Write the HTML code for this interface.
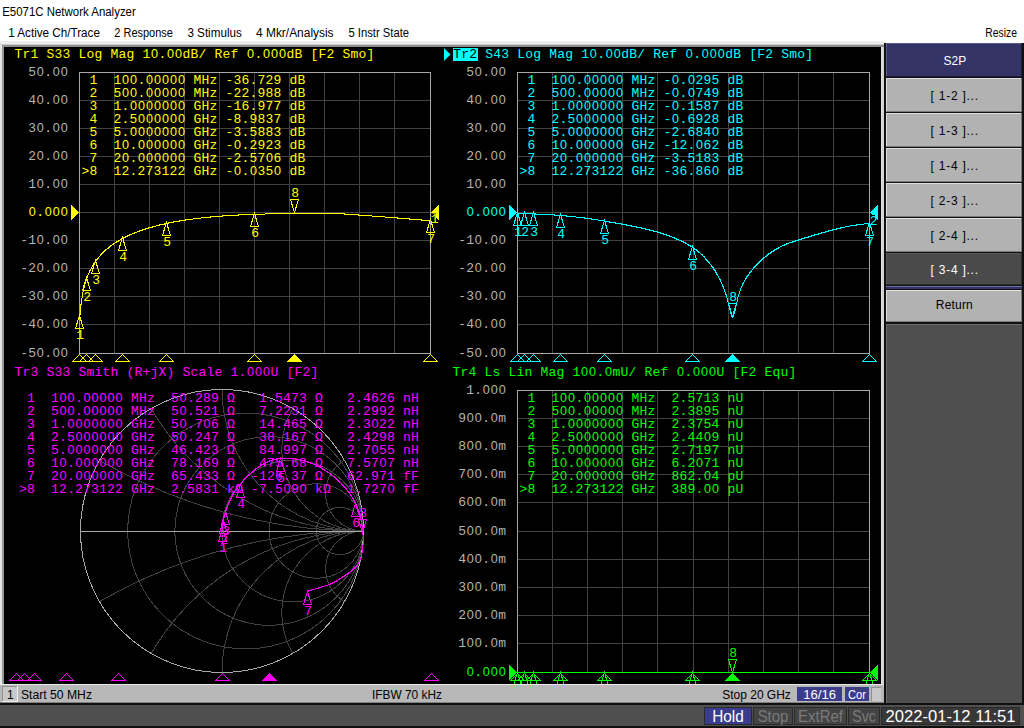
<!DOCTYPE html>
<html><head><meta charset="utf-8"><title>E5071C Network Analyzer</title>
<style>
html,body{margin:0;padding:0;background:#fff;overflow:hidden;}
svg{display:block;}
text{white-space:pre;}
.m{font-family:"Liberation Mono",monospace;font-size:13px;letter-spacing:0.2px;}
.s{font-family:"Liberation Sans",sans-serif;}
.z{font-family:"Liberation Sans",sans-serif;font-size:12.6px;letter-spacing:0.994px;}
.c{shape-rendering:crispEdges;}
</style></head><body>
<svg width="1024" height="728" viewBox="0 0 1024 728">
<defs><clipPath id="plotclip"><rect x="4" y="47" width="877" height="637"/></clipPath>
<clipPath id="smithclip"><circle cx="222" cy="531" r="141.5"/></clipPath></defs>
<rect x="0" y="0" width="1024" height="728" fill="#ffffff" />
<text class="s" x="2.2" y="16" fill="#000" font-size="12" textLength="133.6" lengthAdjust="spacingAndGlyphs" >E5071C Network Analyzer</text>
<text class="s" x="8.2" y="36.5" fill="#000" font-size="12" textLength="91.7" lengthAdjust="spacingAndGlyphs" >1 Active Ch/Trace</text>
<text class="s" x="114.3" y="36.5" fill="#000" font-size="12" textLength="58.6" lengthAdjust="spacingAndGlyphs" >2 Response</text>
<text class="s" x="187.4" y="36.5" fill="#000" font-size="12" textLength="54.4" lengthAdjust="spacingAndGlyphs" >3 Stimulus</text>
<text class="s" x="256" y="36.5" fill="#000" font-size="12" textLength="77.6" lengthAdjust="spacingAndGlyphs" >4 Mkr/Analysis</text>
<text class="s" x="348.5" y="36.5" fill="#000" font-size="12" textLength="60.6" lengthAdjust="spacingAndGlyphs" >5 Instr State</text>
<text class="s" x="985.3" y="36.5" fill="#000" font-size="12" textLength="31.7" lengthAdjust="spacingAndGlyphs" >Resize</text>
<rect x="0" y="41" width="884" height="3" fill="#ececec" />
<rect x="0" y="44" width="884" height="1" fill="#cfcfcf" />
<rect x="0" y="45" width="884" height="2" fill="#8e8e8e" />
<rect x="0" y="45" width="2" height="660" fill="#e4e4e4" />
<rect x="2" y="46" width="2" height="640" fill="#989898" />
<rect x="4" y="47" width="877" height="637" fill="#000000" />
<rect x="881" y="47" width="1" height="640" fill="#e0e0e0" />
<rect x="882" y="47" width="2" height="640" fill="#d4d4d4" />
<rect x="884" y="43" width="140" height="662" fill="#101010" />
<rect x="886" y="43" width="136" height="34" fill="#333366" />
<rect x="886" y="43" width="136" height="1" fill="#5a5a90" />
<rect x="886" y="43" width="1" height="34" fill="#5a5a90" />
<rect x="886" y="76" width="136" height="1" fill="#1c1c40" />
<rect x="1021" y="43" width="1" height="34" fill="#1c1c40" />
<text class="s" x="954.8" y="64.5" fill="#fff" font-size="12" text-anchor="middle" >S2P</text>
<rect x="886" y="78" width="136" height="34" fill="#b2b2b2" />
<rect x="886" y="78" width="136" height="1" fill="#e0e0e0" />
<rect x="886" y="78" width="1" height="34" fill="#e0e0e0" />
<rect x="886" y="111" width="136" height="1" fill="#7a7a7a" />
<rect x="1021" y="78" width="1" height="34" fill="#7a7a7a" />
<text class="s" x="930.55" y="99.5" fill="#000" font-size="12" textLength="47.5" lengthAdjust="spacing" >[ 1-2 ]...</text>
<rect x="886" y="113" width="136" height="34" fill="#b2b2b2" />
<rect x="886" y="113" width="136" height="1" fill="#e0e0e0" />
<rect x="886" y="113" width="1" height="34" fill="#e0e0e0" />
<rect x="886" y="146" width="136" height="1" fill="#7a7a7a" />
<rect x="1021" y="113" width="1" height="34" fill="#7a7a7a" />
<text class="s" x="930.55" y="134.5" fill="#000" font-size="12" textLength="47.5" lengthAdjust="spacing" >[ 1-3 ]...</text>
<rect x="886" y="148" width="136" height="34" fill="#b2b2b2" />
<rect x="886" y="148" width="136" height="1" fill="#e0e0e0" />
<rect x="886" y="148" width="1" height="34" fill="#e0e0e0" />
<rect x="886" y="181" width="136" height="1" fill="#7a7a7a" />
<rect x="1021" y="148" width="1" height="34" fill="#7a7a7a" />
<text class="s" x="930.55" y="169.5" fill="#000" font-size="12" textLength="47.5" lengthAdjust="spacing" >[ 1-4 ]...</text>
<rect x="886" y="183" width="136" height="34" fill="#b2b2b2" />
<rect x="886" y="183" width="136" height="1" fill="#e0e0e0" />
<rect x="886" y="183" width="1" height="34" fill="#e0e0e0" />
<rect x="886" y="216" width="136" height="1" fill="#7a7a7a" />
<rect x="1021" y="183" width="1" height="34" fill="#7a7a7a" />
<text class="s" x="930.55" y="204.5" fill="#000" font-size="12" textLength="47.5" lengthAdjust="spacing" >[ 2-3 ]...</text>
<rect x="886" y="218" width="136" height="34" fill="#b2b2b2" />
<rect x="886" y="218" width="136" height="1" fill="#e0e0e0" />
<rect x="886" y="218" width="1" height="34" fill="#e0e0e0" />
<rect x="886" y="251" width="136" height="1" fill="#7a7a7a" />
<rect x="1021" y="218" width="1" height="34" fill="#7a7a7a" />
<text class="s" x="930.55" y="239.5" fill="#000" font-size="12" textLength="47.5" lengthAdjust="spacing" >[ 2-4 ]...</text>
<rect x="886" y="253" width="136" height="32" fill="#4a4a4a" />
<rect x="886" y="253" width="136" height="1" fill="#5a5a5a" />
<rect x="886" y="253" width="1" height="32" fill="#5a5a5a" />
<rect x="886" y="284" width="136" height="1" fill="#303030" />
<rect x="1021" y="253" width="1" height="32" fill="#303030" />
<text class="s" x="930.55" y="274.4" fill="#fff" font-size="12" textLength="47.5" lengthAdjust="spacing" >[ 3-4 ]...</text>
<rect x="886" y="286" width="136" height="3" fill="#333366" />
<rect x="886" y="286" width="136" height="1" fill="#7070a8" />
<rect x="886" y="290" width="136" height="32" fill="#b2b2b2" />
<rect x="886" y="290" width="136" height="1" fill="#e0e0e0" />
<rect x="886" y="290" width="1" height="32" fill="#e0e0e0" />
<rect x="886" y="321" width="136" height="1" fill="#7a7a7a" />
<rect x="1021" y="290" width="1" height="32" fill="#7a7a7a" />
<text class="s" x="935.8" y="309.3" fill="#000" font-size="12" textLength="37" lengthAdjust="spacing" >Return</text>
<rect x="886" y="324" width="136" height="379" fill="#4f4f4f" />
<rect x="886" y="324" width="136" height="1" fill="#6a6a6a" />
<rect x="886" y="324" width="1" height="379" fill="#6a6a6a" />
<rect x="0" y="684" width="884" height="19" fill="#b8b8b8" />
<rect x="0" y="684" width="884" height="1" fill="#e8e8e8" />
<rect x="0" y="702" width="884" height="1" fill="#808080" />
<rect x="2" y="686" width="16" height="16" fill="#c8c8c8" />
<rect x="2" y="686" width="16" height="1" fill="#909090" />
<rect x="2" y="686" width="1" height="16" fill="#909090" />
<rect x="2" y="701" width="16" height="1" fill="#f0f0f0" />
<rect x="17" y="686" width="1" height="16" fill="#f0f0f0" />
<text class="s" x="7" y="698.5" fill="#000" font-size="12" >1</text>
<text class="s" x="21" y="698.5" fill="#000" font-size="12" textLength="71" lengthAdjust="spacingAndGlyphs" >Start 50 MHz</text>
<text class="s" x="372" y="698.5" fill="#000" font-size="12" textLength="70" lengthAdjust="spacingAndGlyphs" >IFBW 70 kHz</text>
<text class="s" x="722.3" y="698.5" fill="#000" font-size="12" textLength="68.5" lengthAdjust="spacingAndGlyphs" >Stop 20 GHz</text>
<rect x="797" y="687" width="45" height="14" fill="#3c3c8c" />
<text class="s" x="803.3" y="698.5" fill="#fff" font-size="12" textLength="32.7" lengthAdjust="spacingAndGlyphs" >16/16</text>
<rect x="845" y="687" width="24" height="14" fill="#3c3c8c" />
<text class="s" x="848.1" y="698.5" fill="#fff" font-size="12" textLength="17.9" lengthAdjust="spacingAndGlyphs" >Cor</text>
<rect x="871" y="687" width="10" height="14" fill="#c8c8c8" />
<rect x="871" y="687" width="10" height="1" fill="#909090" />
<rect x="871" y="687" width="1" height="14" fill="#909090" />
<rect x="0" y="703" width="1024" height="25" fill="#101010" />
<rect x="0" y="705" width="1024" height="21" fill="#4f4f4f" />
<rect x="704" y="707" width="48" height="18" fill="#2a2a2a" />
<rect x="705" y="708" width="46" height="16" fill="#3c3c8c" />
<text class="s" x="728.0" y="721.8" fill="#fff" font-size="16.5" text-anchor="middle" textLength="31.6" lengthAdjust="spacingAndGlyphs" >Hold</text>
<rect x="753" y="707" width="40" height="18" fill="#2a2a2a" />
<rect x="754" y="708" width="38" height="16" fill="#444444" />
<text class="s" x="773.0" y="721.8" fill="#7a7a7a" font-size="16.5" text-anchor="middle" textLength="30.6" lengthAdjust="spacingAndGlyphs" >Stop</text>
<rect x="794" y="707" width="53" height="18" fill="#2a2a2a" />
<rect x="795" y="708" width="51" height="16" fill="#444444" />
<text class="s" x="820.5" y="721.8" fill="#7a7a7a" font-size="16.5" text-anchor="middle" textLength="45" lengthAdjust="spacingAndGlyphs" >ExtRef</text>
<rect x="848" y="707" width="32" height="18" fill="#2a2a2a" />
<rect x="849" y="708" width="30" height="16" fill="#444444" />
<text class="s" x="864.0" y="721.8" fill="#7a7a7a" font-size="16.5" text-anchor="middle" textLength="23.6" lengthAdjust="spacingAndGlyphs" >Svc</text>
<rect x="881" y="707" width="139" height="18" fill="#2a2a2a" />
<rect x="882" y="708" width="137" height="16" fill="#383838" />
<text class="s" x="950.5" y="721.8" fill="#fff" font-size="16.5" text-anchor="middle" textLength="130" lengthAdjust="spacingAndGlyphs" >2022-01-12 11:51</text>
<g clip-path="url(#plotclip)">
<text class="m" y="58" fill="#ffff00" ><tspan x="14.50">Tr1 S33 Log Mag 1</tspan><tspan class="z" x="151.00">0</tspan><tspan x="158.50">.</tspan><tspan class="z" x="167.00">00</tspan><tspan x="182.50">dB/ Ref</tspan><tspan class="z" x="247.00">0</tspan><tspan x="254.50">.</tspan><tspan class="z" x="263.00">000</tspan><tspan x="286.50">dB [F2 Smo]</tspan></text>
<rect x="114" y="72" width="1" height="282" fill="#424242" class="c"/>
<rect x="149" y="72" width="1" height="282" fill="#424242" class="c"/>
<rect x="184" y="72" width="1" height="282" fill="#424242" class="c"/>
<rect x="219" y="72" width="1" height="282" fill="#424242" class="c"/>
<rect x="254" y="72" width="1" height="282" fill="#424242" class="c"/>
<rect x="289" y="72" width="1" height="282" fill="#424242" class="c"/>
<rect x="324" y="72" width="1" height="282" fill="#424242" class="c"/>
<rect x="359" y="72" width="1" height="282" fill="#424242" class="c"/>
<rect x="394" y="72" width="1" height="282" fill="#424242" class="c"/>
<rect x="79" y="100" width="352" height="1" fill="#424242" class="c"/>
<rect x="79" y="128" width="352" height="1" fill="#424242" class="c"/>
<rect x="79" y="156" width="352" height="1" fill="#424242" class="c"/>
<rect x="79" y="184" width="352" height="1" fill="#424242" class="c"/>
<rect x="79" y="212" width="352" height="1" fill="#424242" class="c"/>
<rect x="79" y="240" width="352" height="1" fill="#424242" class="c"/>
<rect x="79" y="268" width="352" height="1" fill="#424242" class="c"/>
<rect x="79" y="296" width="352" height="1" fill="#424242" class="c"/>
<rect x="79" y="324" width="352" height="1" fill="#424242" class="c"/>
<rect x="79" y="72" width="1" height="282" fill="#a8a8a8" class="c"/>
<rect x="430" y="72" width="1" height="282" fill="#a8a8a8" class="c"/>
<rect x="79" y="72" width="352" height="1" fill="#a8a8a8" class="c"/>
<rect x="79" y="353" width="352" height="1" fill="#a8a8a8" class="c"/>
<text class="m" y="76" fill="#b4b4b4" ><tspan x="28.20">5</tspan><tspan class="z" x="36.70">0</tspan><tspan x="44.20">.</tspan><tspan class="z" x="52.70">00</tspan></text>
<text class="m" y="104" fill="#b4b4b4" ><tspan x="28.20">4</tspan><tspan class="z" x="36.70">0</tspan><tspan x="44.20">.</tspan><tspan class="z" x="52.70">00</tspan></text>
<text class="m" y="132" fill="#b4b4b4" ><tspan x="28.20">3</tspan><tspan class="z" x="36.70">0</tspan><tspan x="44.20">.</tspan><tspan class="z" x="52.70">00</tspan></text>
<text class="m" y="160" fill="#b4b4b4" ><tspan x="28.20">2</tspan><tspan class="z" x="36.70">0</tspan><tspan x="44.20">.</tspan><tspan class="z" x="52.70">00</tspan></text>
<text class="m" y="188" fill="#b4b4b4" ><tspan x="28.20">1</tspan><tspan class="z" x="36.70">0</tspan><tspan x="44.20">.</tspan><tspan class="z" x="52.70">00</tspan></text>
<text class="m" y="216" fill="#ffff00" ><tspan class="z" x="28.70">0</tspan><tspan x="36.20">.</tspan><tspan class="z" x="44.70">000</tspan></text>
<text class="m" y="244" fill="#b4b4b4" ><tspan x="20.20">-1</tspan><tspan class="z" x="36.70">0</tspan><tspan x="44.20">.</tspan><tspan class="z" x="52.70">00</tspan></text>
<text class="m" y="272" fill="#b4b4b4" ><tspan x="20.20">-2</tspan><tspan class="z" x="36.70">0</tspan><tspan x="44.20">.</tspan><tspan class="z" x="52.70">00</tspan></text>
<text class="m" y="300" fill="#b4b4b4" ><tspan x="20.20">-3</tspan><tspan class="z" x="36.70">0</tspan><tspan x="44.20">.</tspan><tspan class="z" x="52.70">00</tspan></text>
<text class="m" y="328" fill="#b4b4b4" ><tspan x="20.20">-4</tspan><tspan class="z" x="36.70">0</tspan><tspan x="44.20">.</tspan><tspan class="z" x="52.70">00</tspan></text>
<text class="m" y="357" fill="#b4b4b4" ><tspan x="20.20">-5</tspan><tspan class="z" x="36.70">0</tspan><tspan x="44.20">.</tspan><tspan class="z" x="52.70">00</tspan></text>
<text class="m" y="84" fill="#ffff00" ><tspan x="89.50">1  1</tspan><tspan class="z" x="122.00">00</tspan><tspan x="137.50">.</tspan><tspan class="z" x="146.00">00000</tspan><tspan x="193.50">MHz -36.729 dB</tspan></text>
<text class="m" y="97" fill="#ffff00" ><tspan x="89.50">2  5</tspan><tspan class="z" x="122.00">00</tspan><tspan x="137.50">.</tspan><tspan class="z" x="146.00">00000</tspan><tspan x="193.50">MHz -22.988 dB</tspan></text>
<text class="m" y="110" fill="#ffff00" ><tspan x="89.50">3  1.</tspan><tspan class="z" x="130.00">0000000</tspan><tspan x="193.50">GHz -16.977 dB</tspan></text>
<text class="m" y="123" fill="#ffff00" ><tspan x="89.50">4  2.5</tspan><tspan class="z" x="138.00">000000</tspan><tspan x="193.50">GHz -8.9837 dB</tspan></text>
<text class="m" y="136" fill="#ffff00" ><tspan x="89.50">5  5.</tspan><tspan class="z" x="130.00">0000000</tspan><tspan x="193.50">GHz -3.5883 dB</tspan></text>
<text class="m" y="149" fill="#ffff00" ><tspan x="89.50">6  1</tspan><tspan class="z" x="122.00">0</tspan><tspan x="129.50">.</tspan><tspan class="z" x="138.00">000000</tspan><tspan x="193.50">GHz -</tspan><tspan class="z" x="234.00">0</tspan><tspan x="241.50">.2923 dB</tspan></text>
<text class="m" y="162" fill="#ffff00" ><tspan x="89.50">7  2</tspan><tspan class="z" x="122.00">0</tspan><tspan x="129.50">.</tspan><tspan class="z" x="138.00">000000</tspan><tspan x="193.50">GHz -2.57</tspan><tspan class="z" x="266.00">0</tspan><tspan x="273.50">6 dB</tspan></text>
<text class="m" y="175" fill="#ffff00" ><tspan x="81.50">&gt;8  12.273122 GHz -</tspan><tspan class="z" x="234.00">0</tspan><tspan x="241.50">.</tspan><tspan class="z" x="250.00">0</tspan><tspan x="257.50">35</tspan><tspan class="z" x="274.00">0</tspan><tspan x="289.50">dB</tspan></text>
<polyline class="c" points="79.5,318.5 79.5,317.5 79.5,318.5 79.5,316.5 80.5,313.5 80.5,311.5 80.5,309.5 80.5,307.5 80.5,305.5 81.5,303.5 81.5,301.5 81.5,300.5 81.5,298.5 82.5,297.5 82.5,296.5 82.5,294.5 82.5,293.5 82.5,292.5 83.5,291.5 83.5,290.5 83.5,289.5 83.5,288.5 84.5,287.5 84.5,286.5 84.5,285.5 84.5,284.5 85.5,283.5 85.5,282.5 85.5,281.5 86.5,280.5 86.5,279.5 86.5,278.5 87.5,277.5 87.5,276.5 87.5,275.5 88.5,274.5 88.5,273.5 89.5,272.5 89.5,271.5 89.5,270.5 90.5,270.5 90.5,269.5 91.5,268.5 91.5,267.5 92.5,266.5 92.5,265.5 93.5,265.5 93.5,264.5 93.5,263.5 94.5,263.5 94.5,262.5 95.5,262.5 95.5,261.5 95.5,260.5 96.5,260.5 96.5,259.5 97.5,259.5 97.5,258.5 98.5,258.5 98.5,257.5 99.5,256.5 100.5,255.5 100.5,254.5 101.5,254.5 101.5,253.5 102.5,253.5 102.5,252.5 103.5,252.5 103.5,251.5 104.5,251.5 104.5,250.5 105.5,250.5 105.5,249.5 106.5,249.5 107.5,248.5 108.5,248.5 108.5,247.5 109.5,247.5 109.5,246.5 110.5,246.5 110.5,245.5 111.5,245.5 112.5,244.5 113.5,244.5 113.5,243.5 114.5,243.5 115.5,242.5 116.5,242.5 116.5,241.5 117.5,241.5 118.5,241.5 118.5,240.5 119.5,240.5 120.5,239.5 121.5,239.5 121.5,238.5 122.5,238.5 123.5,238.5 123.5,237.5 124.5,237.5 125.5,237.5 125.5,236.5 126.5,236.5 127.5,236.5 127.5,235.5 128.5,235.5 129.5,235.5 129.5,234.5 130.5,234.5 131.5,234.5 132.5,233.5 133.5,233.5 134.5,233.5 134.5,232.5 135.5,232.5 136.5,232.5 137.5,231.5 138.5,231.5 139.5,231.5 139.5,230.5 140.5,230.5 141.5,230.5 142.5,230.5 142.5,229.5 143.5,229.5 144.5,229.5 145.5,229.5 145.5,228.5 146.5,228.5 147.5,228.5 148.5,228.5 148.5,227.5 149.5,227.5 150.5,227.5 151.5,227.5 152.5,227.5 152.5,226.5 153.5,226.5 154.5,226.5 155.5,226.5 156.5,225.5 157.5,225.5 158.5,225.5 159.5,225.5 159.5,224.5 160.5,224.5 161.5,224.5 162.5,224.5 163.5,224.5 164.5,224.5 164.5,223.5 165.5,223.5 166.5,223.5 167.5,223.5 168.5,223.5 168.5,222.5 169.5,222.5 170.5,222.5 171.5,222.5 172.5,222.5 173.5,222.5 173.5,221.5 174.5,221.5 175.5,221.5 176.5,221.5 177.5,221.5 178.5,221.5 179.5,221.5 179.5,220.5 180.5,220.5 181.5,220.5 182.5,220.5 183.5,220.5 184.5,220.5 185.5,220.5 185.5,219.5 186.5,219.5 187.5,219.5 188.5,219.5 189.5,219.5 190.5,219.5 191.5,219.5 192.5,219.5 193.5,218.5 194.5,218.5 195.5,218.5 196.5,218.5 197.5,218.5 198.5,218.5 199.5,218.5 200.5,218.5 201.5,217.5 202.5,217.5 203.5,217.5 204.5,217.5 205.5,217.5 206.5,217.5 207.5,217.5 208.5,217.5 209.5,217.5 210.5,217.5 210.5,216.5 211.5,216.5 212.5,216.5 213.5,216.5 214.5,216.5 215.5,216.5 216.5,216.5 217.5,216.5 218.5,216.5 219.5,216.5 220.5,216.5 221.5,216.5 222.5,216.5 222.5,215.5 223.5,215.5 224.5,215.5 225.5,215.5 226.5,215.5 227.5,215.5 228.5,215.5 229.5,215.5 230.5,215.5 231.5,215.5 232.5,215.5 233.5,215.5 234.5,215.5 235.5,215.5 236.5,215.5 237.5,215.5 238.5,215.5 238.5,214.5 239.5,214.5 240.5,214.5 241.5,214.5 242.5,214.5 243.5,214.5 244.5,214.5 245.5,214.5 246.5,214.5 247.5,214.5 248.5,214.5 249.5,214.5 250.5,214.5 251.5,214.5 252.5,214.5 253.5,214.5 254.5,214.5 255.5,214.5 256.5,214.5 257.5,214.5 258.5,214.5 259.5,214.5 260.5,214.5 261.5,214.5 262.5,214.5 263.5,214.5 264.5,214.5 265.5,213.5 266.5,213.5 267.5,213.5 268.5,213.5 269.5,213.5 270.5,213.5 271.5,213.5 272.5,213.5 273.5,213.5 274.5,213.5 275.5,213.5 276.5,213.5 277.5,213.5 278.5,213.5 279.5,213.5 280.5,213.5 281.5,213.5 282.5,213.5 283.5,213.5 284.5,213.5 285.5,213.5 286.5,213.5 287.5,213.5 288.5,213.5 289.5,213.5 290.5,213.5 291.5,213.5 292.5,213.5 293.5,213.5 294.5,213.5 295.5,213.5 296.5,213.5 297.5,213.5 298.5,213.5 299.5,213.5 300.5,213.5 301.5,213.5 302.5,213.5 303.5,213.5 304.5,213.5 305.5,213.5 306.5,213.5 307.5,213.5 308.5,213.5 309.5,213.5 310.5,213.5 311.5,213.5 312.5,213.5 313.5,213.5 314.5,213.5 315.5,213.5 316.5,213.5 317.5,213.5 318.5,213.5 319.5,213.5 320.5,213.5 321.5,213.5 322.5,213.5 323.5,213.5 324.5,213.5 325.5,213.5 326.5,213.5 327.5,213.5 328.5,213.5 329.5,213.5 330.5,213.5 331.5,213.5 332.5,213.5 333.5,213.5 334.5,213.5 335.5,213.5 336.5,213.5 337.5,213.5 338.5,213.5 339.5,213.5 340.5,213.5 341.5,213.5 342.5,213.5 343.5,213.5 344.5,213.5 344.5,214.5 345.5,214.5 346.5,214.5 347.5,214.5 348.5,214.5 349.5,214.5 350.5,214.5 351.5,214.5 352.5,214.5 353.5,214.5 354.5,214.5 355.5,214.5 356.5,214.5 357.5,214.5 358.5,214.5 358.5,215.5 359.5,215.5 360.5,215.5 361.5,215.5 362.5,215.5 363.5,215.5 364.5,215.5 365.5,215.5 366.5,215.5 367.5,215.5 368.5,215.5 369.5,215.5 370.5,215.5 371.5,215.5 372.5,216.5 373.5,216.5 374.5,216.5 375.5,216.5 376.5,216.5 377.5,216.5 378.5,216.5 379.5,216.5 380.5,216.5 381.5,216.5 382.5,216.5 383.5,216.5 384.5,216.5 385.5,217.5 386.5,217.5 387.5,217.5 388.5,217.5 389.5,217.5 390.5,217.5 391.5,217.5 392.5,217.5 393.5,217.5 394.5,217.5 395.5,217.5 396.5,217.5 397.5,217.5 397.5,218.5 398.5,218.5 399.5,218.5 400.5,218.5 401.5,218.5 402.5,218.5 403.5,218.5 404.5,218.5 405.5,218.5 406.5,218.5 407.5,218.5 408.5,218.5 409.5,218.5 409.5,219.5 410.5,219.5 411.5,219.5 412.5,219.5 413.5,219.5 414.5,219.5 415.5,219.5 416.5,219.5 417.5,219.5 418.5,219.5 419.5,219.5 420.5,219.5 421.5,219.5 421.5,220.5 422.5,220.5 423.5,220.5 424.5,220.5 425.5,220.5 426.5,220.5 427.5,220.5 428.5,220.5 429.5,220.5 430.5,220.5" fill="none" stroke="#ffff00" stroke-width="1"/>
<path class="c" d="M71,205 L79,212.5 L71,220 Z" fill="#ffff00"/>
<path class="c" d="M439,205 L431,212.5 L439,220 Z" fill="#ffff00"/>
<rect x="431" y="213.5" width="5" height="10" fill="#000" />
<text class="m" y="223" fill="#ffff00" ><tspan x="430.80">1</tspan></text>
<path class="c" d="M79.5,315.5 L75.5,328.5 L83.5,328.5 Z" fill="none" stroke="#ffff00" stroke-width="1"/>
<text class="m" y="339" fill="#ffff00" ><tspan x="76.30">1</tspan></text>
<path class="c" d="M79.5,354.5 L72.5,361.5 L86.5,361.5 Z" fill="none" stroke="#ffff00" stroke-width="1"/>
<path class="c" d="M86.5,277.5 L82.5,290.5 L90.5,290.5 Z" fill="none" stroke="#ffff00" stroke-width="1"/>
<text class="m" y="301" fill="#ffff00" ><tspan x="83.30">2</tspan></text>
<path class="c" d="M86.5,354.5 L79.5,361.5 L93.5,361.5 Z" fill="none" stroke="#ffff00" stroke-width="1"/>
<path class="c" d="M95.5,260.5 L91.5,273.5 L99.5,273.5 Z" fill="none" stroke="#ffff00" stroke-width="1"/>
<text class="m" y="284" fill="#ffff00" ><tspan x="92.30">3</tspan></text>
<path class="c" d="M95.5,354.5 L88.5,361.5 L102.5,361.5 Z" fill="none" stroke="#ffff00" stroke-width="1"/>
<path class="c" d="M122.5,237.5 L118.5,250.5 L126.5,250.5 Z" fill="none" stroke="#ffff00" stroke-width="1"/>
<text class="m" y="261" fill="#ffff00" ><tspan x="119.30">4</tspan></text>
<path class="c" d="M122.5,354.5 L115.5,361.5 L129.5,361.5 Z" fill="none" stroke="#ffff00" stroke-width="1"/>
<path class="c" d="M166.5,222.5 L162.5,235.5 L170.5,235.5 Z" fill="none" stroke="#ffff00" stroke-width="1"/>
<text class="m" y="246" fill="#ffff00" ><tspan x="163.30">5</tspan></text>
<path class="c" d="M166.5,354.5 L159.5,361.5 L173.5,361.5 Z" fill="none" stroke="#ffff00" stroke-width="1"/>
<path class="c" d="M254.5,213.5 L250.5,226.5 L258.5,226.5 Z" fill="none" stroke="#ffff00" stroke-width="1"/>
<text class="m" y="237" fill="#ffff00" ><tspan x="251.30">6</tspan></text>
<path class="c" d="M254.5,354.5 L247.5,361.5 L261.5,361.5 Z" fill="none" stroke="#ffff00" stroke-width="1"/>
<path class="c" d="M430.5,219.5 L426.5,232.5 L434.5,232.5 Z" fill="none" stroke="#ffff00" stroke-width="1"/>
<text class="m" y="243" fill="#ffff00" ><tspan x="427.30">7</tspan></text>
<path class="c" d="M430.5,354.5 L423.5,361.5 L437.5,361.5 Z" fill="none" stroke="#ffff00" stroke-width="1"/>
<path class="c" d="M294.5,212.5 L290.5,199.5 L298.5,199.5 Z" fill="none" stroke="#ffff00" stroke-width="1"/>
<text class="m" y="197" fill="#ffff00" ><tspan x="291.30">8</tspan></text>
<path class="c" d="M294.5,354 L287,362 L302,362 Z" fill="#ffff00"/>
<path d="M444,48 L450.5,54.5 L444,61 Z" fill="#00ffff"/>
<rect x="453" y="48" width="25" height="13" fill="#00ffff" />
<text class="m" y="58" fill="#000" ><tspan x="453.30">Tr2</tspan></text>
<text class="m" y="58" fill="#00ffff" ><tspan x="485.30">S43 Log Mag 1</tspan><tspan class="z" x="589.80">0</tspan><tspan x="597.30">.</tspan><tspan class="z" x="605.80">00</tspan><tspan x="621.30">dB/ Ref</tspan><tspan class="z" x="685.80">0</tspan><tspan x="693.30">.</tspan><tspan class="z" x="701.80">000</tspan><tspan x="725.30">dB [F2 Smo]</tspan></text>
<rect x="552" y="72" width="1" height="282" fill="#424242" class="c"/>
<rect x="587" y="72" width="1" height="282" fill="#424242" class="c"/>
<rect x="622" y="72" width="1" height="282" fill="#424242" class="c"/>
<rect x="657" y="72" width="1" height="282" fill="#424242" class="c"/>
<rect x="693" y="72" width="1" height="282" fill="#424242" class="c"/>
<rect x="728" y="72" width="1" height="282" fill="#424242" class="c"/>
<rect x="763" y="72" width="1" height="282" fill="#424242" class="c"/>
<rect x="798" y="72" width="1" height="282" fill="#424242" class="c"/>
<rect x="833" y="72" width="1" height="282" fill="#424242" class="c"/>
<rect x="517" y="100" width="353" height="1" fill="#424242" class="c"/>
<rect x="517" y="128" width="353" height="1" fill="#424242" class="c"/>
<rect x="517" y="156" width="353" height="1" fill="#424242" class="c"/>
<rect x="517" y="184" width="353" height="1" fill="#424242" class="c"/>
<rect x="517" y="212" width="353" height="1" fill="#424242" class="c"/>
<rect x="517" y="240" width="353" height="1" fill="#424242" class="c"/>
<rect x="517" y="268" width="353" height="1" fill="#424242" class="c"/>
<rect x="517" y="296" width="353" height="1" fill="#424242" class="c"/>
<rect x="517" y="324" width="353" height="1" fill="#424242" class="c"/>
<rect x="517" y="72" width="1" height="282" fill="#a8a8a8" class="c"/>
<rect x="869" y="72" width="1" height="282" fill="#a8a8a8" class="c"/>
<rect x="517" y="72" width="353" height="1" fill="#a8a8a8" class="c"/>
<rect x="517" y="353" width="353" height="1" fill="#a8a8a8" class="c"/>
<text class="m" y="76" fill="#b4b4b4" ><tspan x="466.20">5</tspan><tspan class="z" x="474.70">0</tspan><tspan x="482.20">.</tspan><tspan class="z" x="490.70">00</tspan></text>
<text class="m" y="104" fill="#b4b4b4" ><tspan x="466.20">4</tspan><tspan class="z" x="474.70">0</tspan><tspan x="482.20">.</tspan><tspan class="z" x="490.70">00</tspan></text>
<text class="m" y="132" fill="#b4b4b4" ><tspan x="466.20">3</tspan><tspan class="z" x="474.70">0</tspan><tspan x="482.20">.</tspan><tspan class="z" x="490.70">00</tspan></text>
<text class="m" y="160" fill="#b4b4b4" ><tspan x="466.20">2</tspan><tspan class="z" x="474.70">0</tspan><tspan x="482.20">.</tspan><tspan class="z" x="490.70">00</tspan></text>
<text class="m" y="188" fill="#b4b4b4" ><tspan x="466.20">1</tspan><tspan class="z" x="474.70">0</tspan><tspan x="482.20">.</tspan><tspan class="z" x="490.70">00</tspan></text>
<text class="m" y="216" fill="#00ffff" ><tspan class="z" x="466.70">0</tspan><tspan x="474.20">.</tspan><tspan class="z" x="482.70">000</tspan></text>
<text class="m" y="244" fill="#b4b4b4" ><tspan x="458.20">-1</tspan><tspan class="z" x="474.70">0</tspan><tspan x="482.20">.</tspan><tspan class="z" x="490.70">00</tspan></text>
<text class="m" y="272" fill="#b4b4b4" ><tspan x="458.20">-2</tspan><tspan class="z" x="474.70">0</tspan><tspan x="482.20">.</tspan><tspan class="z" x="490.70">00</tspan></text>
<text class="m" y="300" fill="#b4b4b4" ><tspan x="458.20">-3</tspan><tspan class="z" x="474.70">0</tspan><tspan x="482.20">.</tspan><tspan class="z" x="490.70">00</tspan></text>
<text class="m" y="328" fill="#b4b4b4" ><tspan x="458.20">-4</tspan><tspan class="z" x="474.70">0</tspan><tspan x="482.20">.</tspan><tspan class="z" x="490.70">00</tspan></text>
<text class="m" y="357" fill="#b4b4b4" ><tspan x="458.20">-5</tspan><tspan class="z" x="474.70">0</tspan><tspan x="482.20">.</tspan><tspan class="z" x="490.70">00</tspan></text>
<text class="m" y="84" fill="#00ffff" ><tspan x="527.50">1  1</tspan><tspan class="z" x="560.00">00</tspan><tspan x="575.50">.</tspan><tspan class="z" x="584.00">00000</tspan><tspan x="631.50">MHz -</tspan><tspan class="z" x="672.00">0</tspan><tspan x="679.50">.</tspan><tspan class="z" x="688.00">0</tspan><tspan x="695.50">295 dB</tspan></text>
<text class="m" y="97" fill="#00ffff" ><tspan x="527.50">2  5</tspan><tspan class="z" x="560.00">00</tspan><tspan x="575.50">.</tspan><tspan class="z" x="584.00">00000</tspan><tspan x="631.50">MHz -</tspan><tspan class="z" x="672.00">0</tspan><tspan x="679.50">.</tspan><tspan class="z" x="688.00">0</tspan><tspan x="695.50">749 dB</tspan></text>
<text class="m" y="110" fill="#00ffff" ><tspan x="527.50">3  1.</tspan><tspan class="z" x="568.00">0000000</tspan><tspan x="631.50">GHz -</tspan><tspan class="z" x="672.00">0</tspan><tspan x="679.50">.1587 dB</tspan></text>
<text class="m" y="123" fill="#00ffff" ><tspan x="527.50">4  2.5</tspan><tspan class="z" x="576.00">000000</tspan><tspan x="631.50">GHz -</tspan><tspan class="z" x="672.00">0</tspan><tspan x="679.50">.6928 dB</tspan></text>
<text class="m" y="136" fill="#00ffff" ><tspan x="527.50">5  5.</tspan><tspan class="z" x="568.00">0000000</tspan><tspan x="631.50">GHz -2.684</tspan><tspan class="z" x="712.00">0</tspan><tspan x="727.50">dB</tspan></text>
<text class="m" y="149" fill="#00ffff" ><tspan x="527.50">6  1</tspan><tspan class="z" x="560.00">0</tspan><tspan x="567.50">.</tspan><tspan class="z" x="576.00">000000</tspan><tspan x="631.50">GHz -12.</tspan><tspan class="z" x="696.00">0</tspan><tspan x="703.50">62 dB</tspan></text>
<text class="m" y="162" fill="#00ffff" ><tspan x="527.50">7  2</tspan><tspan class="z" x="560.00">0</tspan><tspan x="567.50">.</tspan><tspan class="z" x="576.00">000000</tspan><tspan x="631.50">GHz -3.5183 dB</tspan></text>
<text class="m" y="175" fill="#00ffff" ><tspan x="519.50">&gt;8  12.273122 GHz -36.86</tspan><tspan class="z" x="712.00">0</tspan><tspan x="727.50">dB</tspan></text>
<polyline class="c" points="517.5,213.5 518.5,213.5 519.5,213.5 520.5,213.5 521.5,213.5 522.5,213.5 523.5,213.5 524.5,213.5 525.5,213.5 526.5,213.5 527.5,213.5 528.5,213.5 529.5,213.5 530.5,213.5 531.5,213.5 532.5,213.5 533.5,213.5 534.5,213.5 535.5,213.5 535.5,214.5 536.5,214.5 537.5,214.5 538.5,214.5 539.5,214.5 540.5,214.5 541.5,214.5 542.5,214.5 543.5,214.5 544.5,214.5 545.5,214.5 546.5,214.5 547.5,214.5 548.5,214.5 549.5,214.5 550.5,214.5 551.5,214.5 552.5,214.5 553.5,214.5 554.5,214.5 554.5,215.5 555.5,215.5 556.5,215.5 557.5,215.5 558.5,215.5 559.5,215.5 560.5,215.5 561.5,215.5 562.5,215.5 563.5,215.5 564.5,215.5 565.5,215.5 566.5,215.5 566.5,216.5 567.5,216.5 568.5,216.5 569.5,216.5 570.5,216.5 571.5,216.5 572.5,216.5 573.5,216.5 574.5,216.5 575.5,216.5 576.5,217.5 577.5,217.5 578.5,217.5 579.5,217.5 580.5,217.5 581.5,217.5 582.5,217.5 583.5,217.5 584.5,217.5 584.5,218.5 585.5,218.5 586.5,218.5 587.5,218.5 588.5,218.5 589.5,218.5 590.5,218.5 591.5,218.5 591.5,219.5 592.5,219.5 593.5,219.5 594.5,219.5 595.5,219.5 596.5,219.5 597.5,219.5 598.5,220.5 599.5,220.5 600.5,220.5 601.5,220.5 602.5,220.5 603.5,220.5 604.5,221.5 605.5,221.5 606.5,221.5 607.5,221.5 608.5,221.5 609.5,221.5 609.5,222.5 610.5,222.5 611.5,222.5 612.5,222.5 613.5,222.5 614.5,222.5 615.5,222.5 615.5,223.5 616.5,223.5 617.5,223.5 618.5,223.5 619.5,223.5 620.5,223.5 621.5,223.5 621.5,224.5 622.5,224.5 623.5,224.5 624.5,224.5 625.5,224.5 626.5,224.5 626.5,225.5 627.5,225.5 628.5,225.5 629.5,225.5 630.5,225.5 631.5,225.5 631.5,226.5 632.5,226.5 633.5,226.5 634.5,226.5 635.5,226.5 636.5,226.5 636.5,227.5 637.5,227.5 638.5,227.5 639.5,227.5 640.5,227.5 641.5,227.5 641.5,228.5 642.5,228.5 643.5,228.5 644.5,228.5 645.5,228.5 645.5,229.5 646.5,229.5 647.5,229.5 648.5,229.5 649.5,229.5 649.5,230.5 650.5,230.5 651.5,230.5 652.5,230.5 653.5,230.5 653.5,231.5 654.5,231.5 655.5,231.5 656.5,231.5 657.5,231.5 657.5,232.5 658.5,232.5 659.5,232.5 660.5,232.5 660.5,233.5 661.5,233.5 662.5,233.5 663.5,233.5 663.5,234.5 664.5,234.5 665.5,234.5 666.5,234.5 666.5,235.5 667.5,235.5 668.5,235.5 669.5,235.5 669.5,236.5 670.5,236.5 671.5,236.5 672.5,237.5 673.5,237.5 674.5,237.5 674.5,238.5 675.5,238.5 676.5,238.5 676.5,239.5 677.5,239.5 678.5,239.5 679.5,240.5 680.5,240.5 681.5,240.5 681.5,241.5 682.5,241.5 683.5,241.5 683.5,242.5 684.5,242.5 685.5,242.5 685.5,243.5 686.5,243.5 687.5,244.5 688.5,244.5 688.5,245.5 689.5,245.5 690.5,245.5 690.5,246.5 691.5,246.5 692.5,247.5 693.5,247.5 693.5,248.5 694.5,248.5 694.5,249.5 695.5,249.5 696.5,249.5 696.5,250.5 697.5,250.5 697.5,251.5 698.5,251.5 698.5,252.5 699.5,252.5 700.5,253.5 701.5,254.5 702.5,254.5 702.5,255.5 703.5,256.5 704.5,256.5 704.5,257.5 705.5,258.5 705.5,259.5 706.5,259.5 706.5,260.5 707.5,260.5 707.5,261.5 708.5,261.5 708.5,262.5 709.5,262.5 709.5,263.5 710.5,264.5 711.5,265.5 711.5,266.5 712.5,266.5 712.5,267.5 713.5,267.5 713.5,268.5 713.5,269.5 714.5,269.5 714.5,270.5 715.5,270.5 715.5,271.5 715.5,272.5 716.5,272.5 716.5,273.5 716.5,274.5 717.5,274.5 717.5,275.5 718.5,276.5 718.5,277.5 719.5,278.5 719.5,279.5 720.5,279.5 720.5,280.5 720.5,281.5 721.5,282.5 721.5,283.5 722.5,284.5 722.5,285.5 722.5,286.5 723.5,286.5 723.5,287.5 723.5,288.5 724.5,289.5 724.5,290.5 724.5,291.5 725.5,292.5 725.5,293.5 725.5,294.5 726.5,294.5 726.5,295.5 726.5,296.5 726.5,297.5 727.5,298.5 727.5,299.5 727.5,300.5 727.5,301.5 728.5,302.5 728.5,303.5 728.5,304.5 728.5,305.5 729.5,306.5 729.5,307.5 729.5,308.5 729.5,309.5 730.5,310.5 730.5,311.5 730.5,312.5 730.5,313.5 731.5,314.5 731.5,315.5 731.5,316.5 732.5,316.5 732.5,317.5 733.5,316.5 733.5,315.5 733.5,314.5 734.5,313.5 734.5,312.5 734.5,311.5 735.5,310.5 735.5,309.5 735.5,308.5 735.5,307.5 735.5,306.5 736.5,304.5 736.5,303.5 736.5,302.5 737.5,301.5 737.5,300.5 737.5,299.5 737.5,298.5 737.5,297.5 738.5,296.5 738.5,295.5 738.5,294.5 739.5,293.5 739.5,292.5 739.5,291.5 740.5,290.5 740.5,289.5 740.5,288.5 741.5,287.5 741.5,286.5 742.5,285.5 742.5,284.5 742.5,283.5 743.5,283.5 743.5,282.5 744.5,281.5 744.5,280.5 745.5,279.5 745.5,278.5 746.5,278.5 746.5,277.5 746.5,276.5 747.5,276.5 747.5,275.5 748.5,275.5 748.5,274.5 749.5,273.5 749.5,272.5 750.5,272.5 750.5,271.5 751.5,271.5 751.5,270.5 752.5,269.5 753.5,268.5 753.5,267.5 754.5,267.5 754.5,266.5 755.5,266.5 755.5,265.5 756.5,265.5 756.5,264.5 757.5,264.5 757.5,263.5 758.5,263.5 758.5,262.5 759.5,262.5 759.5,261.5 760.5,261.5 760.5,260.5 761.5,260.5 761.5,259.5 762.5,259.5 762.5,258.5 763.5,258.5 763.5,257.5 764.5,257.5 765.5,256.5 766.5,256.5 766.5,255.5 767.5,255.5 767.5,254.5 768.5,254.5 768.5,253.5 769.5,253.5 770.5,253.5 770.5,252.5 771.5,252.5 771.5,251.5 772.5,251.5 773.5,251.5 773.5,250.5 774.5,250.5 774.5,249.5 775.5,249.5 776.5,249.5 776.5,248.5 777.5,248.5 778.5,248.5 778.5,247.5 779.5,247.5 780.5,246.5 781.5,246.5 782.5,245.5 783.5,245.5 784.5,245.5 784.5,244.5 785.5,244.5 786.5,244.5 786.5,243.5 787.5,243.5 788.5,243.5 789.5,242.5 790.5,242.5 791.5,242.5 792.5,242.5 792.5,241.5 793.5,241.5 794.5,241.5 795.5,241.5 795.5,240.5 796.5,240.5 797.5,240.5 798.5,240.5 798.5,239.5 799.5,239.5 800.5,239.5 801.5,239.5 801.5,238.5 802.5,238.5 803.5,238.5 804.5,238.5 804.5,237.5 805.5,237.5 806.5,237.5 807.5,237.5 808.5,237.5 808.5,236.5 809.5,236.5 810.5,236.5 811.5,236.5 811.5,235.5 812.5,235.5 813.5,235.5 814.5,235.5 814.5,234.5 815.5,234.5 816.5,234.5 817.5,234.5 818.5,234.5 818.5,233.5 819.5,233.5 820.5,233.5 821.5,233.5 821.5,232.5 822.5,232.5 823.5,232.5 824.5,232.5 825.5,232.5 825.5,231.5 826.5,231.5 827.5,231.5 828.5,231.5 828.5,230.5 829.5,230.5 830.5,230.5 831.5,230.5 832.5,230.5 832.5,229.5 833.5,229.5 834.5,229.5 835.5,229.5 836.5,229.5 836.5,228.5 837.5,228.5 838.5,228.5 839.5,228.5 840.5,228.5 840.5,227.5 841.5,227.5 842.5,227.5 843.5,227.5 844.5,227.5 845.5,226.5 846.5,226.5 847.5,226.5 848.5,226.5 849.5,226.5 850.5,225.5 851.5,225.5 852.5,225.5 853.5,225.5 854.5,225.5 855.5,225.5 856.5,225.5 856.5,224.5 857.5,224.5 858.5,224.5 859.5,224.5 860.5,224.5 861.5,224.5 862.5,224.5 863.5,224.5 864.5,223.5 865.5,223.5 866.5,223.5 867.5,223.5 868.5,223.5 869.5,223.5" fill="none" stroke="#00ffff" stroke-width="1"/>
<path class="c" d="M509,205 L517,212.5 L509,220 Z" fill="#00ffff"/>
<path class="c" d="M878,205 L870,212.5 L878,220 Z" fill="#00ffff"/>
<rect x="870" y="215.0" width="5" height="10" fill="#000" />
<text class="m" y="224.5" fill="#00ffff" ><tspan x="869.80">2</tspan></text>
<path class="c" d="M517.5,212.5 L513.5,225.5 L521.5,225.5 Z" fill="none" stroke="#00ffff" stroke-width="1"/>
<text class="m" y="236" fill="#00ffff" ><tspan x="514.30">1</tspan></text>
<path class="c" d="M517.5,354.5 L510.5,361.5 L524.5,361.5 Z" fill="none" stroke="#00ffff" stroke-width="1"/>
<path class="c" d="M524.5,212.5 L520.5,225.5 L528.5,225.5 Z" fill="none" stroke="#00ffff" stroke-width="1"/>
<text class="m" y="236" fill="#00ffff" ><tspan x="521.30">2</tspan></text>
<path class="c" d="M524.5,354.5 L517.5,361.5 L531.5,361.5 Z" fill="none" stroke="#00ffff" stroke-width="1"/>
<path class="c" d="M533.5,212.5 L529.5,225.5 L537.5,225.5 Z" fill="none" stroke="#00ffff" stroke-width="1"/>
<text class="m" y="236" fill="#00ffff" ><tspan x="530.30">3</tspan></text>
<path class="c" d="M533.5,354.5 L526.5,361.5 L540.5,361.5 Z" fill="none" stroke="#00ffff" stroke-width="1"/>
<path class="c" d="M560.5,214.5 L556.5,227.5 L564.5,227.5 Z" fill="none" stroke="#00ffff" stroke-width="1"/>
<text class="m" y="238" fill="#00ffff" ><tspan x="557.30">4</tspan></text>
<path class="c" d="M560.5,354.5 L553.5,361.5 L567.5,361.5 Z" fill="none" stroke="#00ffff" stroke-width="1"/>
<path class="c" d="M604.5,220.5 L600.5,233.5 L608.5,233.5 Z" fill="none" stroke="#00ffff" stroke-width="1"/>
<text class="m" y="244" fill="#00ffff" ><tspan x="601.30">5</tspan></text>
<path class="c" d="M604.5,354.5 L597.5,361.5 L611.5,361.5 Z" fill="none" stroke="#00ffff" stroke-width="1"/>
<path class="c" d="M692.5,246.5 L688.5,259.5 L696.5,259.5 Z" fill="none" stroke="#00ffff" stroke-width="1"/>
<text class="m" y="270" fill="#00ffff" ><tspan x="689.30">6</tspan></text>
<path class="c" d="M692.5,354.5 L685.5,361.5 L699.5,361.5 Z" fill="none" stroke="#00ffff" stroke-width="1"/>
<path class="c" d="M869.5,222.5 L865.5,235.5 L873.5,235.5 Z" fill="none" stroke="#00ffff" stroke-width="1"/>
<text class="m" y="246" fill="#00ffff" ><tspan x="866.30">7</tspan></text>
<path class="c" d="M869.5,354.5 L862.5,361.5 L876.5,361.5 Z" fill="none" stroke="#00ffff" stroke-width="1"/>
<path class="c" d="M732.5,316.5 L728.5,303.5 L736.5,303.5 Z" fill="none" stroke="#00ffff" stroke-width="1"/>
<text class="m" y="301" fill="#00ffff" ><tspan x="729.30">8</tspan></text>
<path class="c" d="M732.5,354 L725,362 L740,362 Z" fill="#00ffff"/>
<text class="m" y="376" fill="#ff00ff" ><tspan x="14.50">Tr3 S33 Smith (R+jX) Scale 1.</tspan><tspan class="z" x="247.00">000</tspan><tspan x="270.50">U [F2]</tspan></text>
<g class="c" fill="none" stroke-width="1">
<g clip-path="url(#smithclip)" stroke="#424242">
<circle cx="245.58" cy="531" r="117.92"/>
<circle cx="269.17" cy="531" r="94.33"/>
<circle cx="292.75" cy="531" r="70.75"/>
<circle cx="316.33" cy="531" r="47.17"/>
<circle cx="339.92" cy="531" r="23.58"/>
<circle cx="363.5" cy="2.91" r="528.09"/>
<circle cx="363.5" cy="1059.09" r="528.09"/>
<circle cx="363.5" cy="285.91" r="245.09"/>
<circle cx="363.5" cy="776.09" r="245.09"/>
<circle cx="363.5" cy="389.50" r="141.50"/>
<circle cx="363.5" cy="672.50" r="141.50"/>
<circle cx="363.5" cy="449.30" r="81.70"/>
<circle cx="363.5" cy="612.70" r="81.70"/>
<circle cx="363.5" cy="493.09" r="37.91"/>
<circle cx="363.5" cy="568.91" r="37.91"/>
</g>
<circle cx="222" cy="531" r="141.5" stroke="#a8a8a8"/>
</g>
<rect x="80" y="531" width="284" height="1" fill="#a8a8a8" class="c"/>
<text class="m" y="402" fill="#ff00ff" ><tspan x="27.00">1  1</tspan><tspan class="z" x="59.50">00</tspan><tspan x="75.00">.</tspan><tspan class="z" x="83.50">00000</tspan><tspan x="131.00">MHz  5</tspan><tspan class="z" x="179.50">0</tspan><tspan x="187.00">.289 Ω   1.5473 Ω   2.4626 nH</tspan></text>
<text class="m" y="415" fill="#ff00ff" ><tspan x="27.00">2  5</tspan><tspan class="z" x="59.50">00</tspan><tspan x="75.00">.</tspan><tspan class="z" x="83.50">00000</tspan><tspan x="131.00">MHz  5</tspan><tspan class="z" x="179.50">0</tspan><tspan x="187.00">.521 Ω   7.2231 Ω   2.2992 nH</tspan></text>
<text class="m" y="428" fill="#ff00ff" ><tspan x="27.00">3  1.</tspan><tspan class="z" x="67.50">0000000</tspan><tspan x="131.00">GHz  5</tspan><tspan class="z" x="179.50">0</tspan><tspan x="187.00">.7</tspan><tspan class="z" x="203.50">0</tspan><tspan x="211.00">6 Ω   14.465 Ω   2.3</tspan><tspan class="z" x="371.50">0</tspan><tspan x="379.00">22 nH</tspan></text>
<text class="m" y="441" fill="#ff00ff" ><tspan x="27.00">4  2.5</tspan><tspan class="z" x="75.50">000000</tspan><tspan x="131.00">GHz  5</tspan><tspan class="z" x="179.50">0</tspan><tspan x="187.00">.247 Ω   38.167 Ω   2.4298 nH</tspan></text>
<text class="m" y="454" fill="#ff00ff" ><tspan x="27.00">5  5.</tspan><tspan class="z" x="67.50">0000000</tspan><tspan x="131.00">GHz  46.423 Ω   84.997 Ω   2.7</tspan><tspan class="z" x="371.50">0</tspan><tspan x="379.00">55 nH</tspan></text>
<text class="m" y="467" fill="#ff00ff" ><tspan x="27.00">6  1</tspan><tspan class="z" x="59.50">0</tspan><tspan x="67.00">.</tspan><tspan class="z" x="75.50">000000</tspan><tspan x="131.00">GHz  78.169 Ω   475.68 Ω   7.57</tspan><tspan class="z" x="379.50">0</tspan><tspan x="387.00">7 nH</tspan></text>
<text class="m" y="480" fill="#ff00ff" ><tspan x="27.00">7  2</tspan><tspan class="z" x="59.50">0</tspan><tspan x="67.00">.</tspan><tspan class="z" x="75.50">000000</tspan><tspan x="131.00">GHz  65.433 Ω  -126.37 Ω   62.971 fF</tspan></text>
<text class="m" y="493" fill="#ff00ff" ><tspan x="19.00">&gt;8  12.273122 GHz  2.5831 kΩ -7.5</tspan><tspan class="z" x="283.50">0</tspan><tspan x="291.00">9</tspan><tspan class="z" x="299.50">0</tspan><tspan x="315.00">kΩ  1.727</tspan><tspan class="z" x="387.50">0</tspan><tspan x="403.00">fF</tspan></text>
<polyline class="c" points="222.5,529.5 222.5,528.5 222.5,527.5 222.5,526.5 222.5,525.5 222.5,524.5 222.5,523.5 223.5,523.5 223.5,522.5 223.5,521.5 223.5,520.5 223.5,519.5 223.5,518.5 224.5,517.5 224.5,516.5 224.5,515.5 224.5,514.5 225.5,514.5 225.5,513.5 225.5,512.5 225.5,511.5 225.5,510.5 226.5,510.5 226.5,509.5 226.5,508.5 226.5,507.5 227.5,507.5 227.5,506.5 227.5,505.5 228.5,504.5 228.5,503.5 228.5,502.5 229.5,502.5 229.5,501.5 229.5,500.5 230.5,500.5 230.5,499.5 230.5,498.5 231.5,498.5 231.5,497.5 231.5,496.5 232.5,496.5 232.5,495.5 232.5,494.5 233.5,494.5 233.5,493.5 233.5,492.5 234.5,492.5 234.5,491.5 235.5,490.5 235.5,489.5 236.5,489.5 236.5,488.5 237.5,488.5 237.5,487.5 238.5,486.5 238.5,485.5 239.5,485.5 239.5,484.5 240.5,484.5 240.5,483.5 241.5,483.5 241.5,482.5 242.5,482.5 242.5,481.5 243.5,480.5 243.5,479.5 244.5,479.5 244.5,478.5 245.5,478.5 245.5,477.5 246.5,477.5 246.5,476.5 247.5,476.5 247.5,475.5 248.5,475.5 248.5,474.5 249.5,474.5 250.5,473.5 251.5,472.5 252.5,472.5 252.5,471.5 253.5,471.5 253.5,470.5 254.5,470.5 254.5,469.5 255.5,469.5 255.5,468.5 256.5,468.5 257.5,467.5 258.5,467.5 258.5,466.5 259.5,466.5 260.5,466.5 260.5,465.5 261.5,465.5 261.5,464.5 262.5,464.5 263.5,464.5 263.5,463.5 264.5,463.5 265.5,463.5 265.5,462.5 266.5,462.5 267.5,462.5 267.5,461.5 268.5,461.5 269.5,461.5 269.5,460.5 270.5,460.5 271.5,460.5 272.5,460.5 272.5,459.5 273.5,459.5 274.5,459.5 275.5,459.5 276.5,459.5 276.5,458.5 277.5,458.5 278.5,458.5 279.5,458.5 280.5,458.5 281.5,458.5 282.5,458.5 283.5,458.5 284.5,458.5 285.5,458.5 286.5,458.5 287.5,458.5 288.5,458.5 289.5,458.5 290.5,458.5 291.5,458.5 292.5,458.5 293.5,458.5 294.5,458.5 295.5,458.5 295.5,459.5 296.5,459.5 297.5,459.5 298.5,459.5 299.5,459.5 300.5,459.5 300.5,460.5 301.5,460.5 302.5,460.5 303.5,460.5 304.5,460.5 304.5,461.5 305.5,461.5 306.5,461.5 307.5,461.5 307.5,462.5 308.5,462.5 309.5,462.5 310.5,462.5 310.5,463.5 311.5,463.5 312.5,463.5 313.5,464.5 314.5,464.5 315.5,464.5 315.5,465.5 316.5,465.5 317.5,465.5 317.5,466.5 318.5,466.5 319.5,466.5 319.5,467.5 320.5,467.5 321.5,467.5 321.5,468.5 322.5,468.5 322.5,469.5 323.5,469.5 324.5,469.5 324.5,470.5 325.5,470.5 326.5,471.5 327.5,471.5 327.5,472.5 328.5,472.5 329.5,473.5 330.5,473.5 330.5,474.5 331.5,474.5 331.5,475.5 332.5,475.5 333.5,476.5 334.5,476.5 334.5,477.5 335.5,477.5 335.5,478.5 336.5,478.5 336.5,479.5 337.5,479.5 337.5,480.5 338.5,480.5 338.5,481.5 339.5,481.5 339.5,482.5 340.5,482.5 341.5,483.5 341.5,484.5 342.5,484.5 342.5,485.5 343.5,485.5 343.5,486.5 344.5,486.5 344.5,487.5 345.5,487.5 345.5,488.5 346.5,488.5 346.5,489.5 347.5,490.5 347.5,491.5 348.5,491.5 348.5,492.5 349.5,492.5 349.5,493.5 350.5,494.5 350.5,495.5 351.5,495.5 351.5,496.5 352.5,497.5 352.5,498.5 353.5,498.5 353.5,499.5 353.5,500.5 354.5,500.5 354.5,501.5 354.5,502.5 355.5,502.5 355.5,503.5 355.5,504.5 356.5,504.5 356.5,505.5 356.5,506.5 357.5,506.5 357.5,507.5 357.5,508.5 358.5,509.5 358.5,510.5 358.5,511.5 359.5,511.5 359.5,512.5 359.5,513.5 359.5,514.5 359.5,515.5 360.5,515.5 360.5,516.5 360.5,517.5 360.5,518.5 360.5,519.5 361.5,519.5 361.5,520.5 361.5,521.5 361.5,522.5 361.5,523.5 361.5,524.5 361.5,525.5 362.5,525.5 362.5,526.5 362.5,527.5 362.5,528.5 362.5,529.5 362.5,530.5 362.5,531.5 362.5,532.5 362.5,533.5 362.5,534.5 363.5,535.5 363.5,536.5 363.5,537.5 363.5,538.5 363.5,539.5 363.5,540.5 363.5,541.5 363.5,542.5 363.5,543.5 363.5,544.5 362.5,545.5 362.5,546.5 362.5,547.5 362.5,548.5 362.5,549.5 362.5,550.5 362.5,551.5 362.5,552.5 361.5,552.5 361.5,553.5 361.5,554.5 361.5,555.5 361.5,556.5 360.5,557.5 360.5,558.5 360.5,559.5 359.5,560.5 359.5,561.5 358.5,562.5 358.5,563.5 357.5,564.5 357.5,565.5 356.5,565.5 356.5,566.5 355.5,566.5 355.5,567.5 354.5,567.5 354.5,568.5 353.5,568.5 353.5,569.5 352.5,569.5 352.5,570.5 351.5,570.5 351.5,571.5 350.5,571.5 349.5,572.5 348.5,572.5 348.5,573.5 347.5,573.5 347.5,574.5 346.5,574.5 345.5,574.5 345.5,575.5 344.5,575.5 344.5,576.5 343.5,576.5 342.5,576.5 342.5,577.5 341.5,577.5 340.5,578.5 339.5,578.5 339.5,579.5 338.5,579.5 337.5,580.5 336.5,580.5 336.5,581.5 335.5,581.5 334.5,581.5 334.5,582.5 333.5,582.5 332.5,582.5 332.5,583.5 331.5,583.5 330.5,583.5 330.5,584.5 329.5,584.5 328.5,584.5 327.5,585.5 326.5,585.5 325.5,585.5 324.5,586.5 323.5,586.5 322.5,586.5 321.5,586.5 321.5,587.5 320.5,587.5 319.5,587.5 318.5,587.5 318.5,588.5 317.5,588.5 316.5,588.5 315.5,588.5 314.5,589.5 313.5,589.5 312.5,589.5 311.5,589.5 311.5,590.5 310.5,590.5 309.5,590.5 307.5,591.5 307.5,592.5" fill="none" stroke="#ff00ff" stroke-width="1"/>
<path class="c" d="M222.5,528.5 L218.5,541.5 L226.5,541.5 Z" fill="none" stroke="#ff00ff" stroke-width="1"/>
<text class="m" y="552" fill="#ff00ff" ><tspan x="219.30">1</tspan></text>
<path class="c" d="M16.5,673.5 L9.5,680.5 L23.5,680.5 Z" fill="none" stroke="#ff00ff" stroke-width="1"/>
<path class="c" d="M223.5,520.5 L219.5,533.5 L227.5,533.5 Z" fill="none" stroke="#ff00ff" stroke-width="1"/>
<text class="m" y="544" fill="#ff00ff" ><tspan x="220.30">2</tspan></text>
<path class="c" d="M24.5,673.5 L17.5,680.5 L31.5,680.5 Z" fill="none" stroke="#ff00ff" stroke-width="1"/>
<path class="c" d="M225.5,511.5 L221.5,524.5 L229.5,524.5 Z" fill="none" stroke="#ff00ff" stroke-width="1"/>
<text class="m" y="535" fill="#ff00ff" ><tspan x="222.30">3</tspan></text>
<path class="c" d="M34.5,673.5 L27.5,680.5 L41.5,680.5 Z" fill="none" stroke="#ff00ff" stroke-width="1"/>
<path class="c" d="M240.5,484.5 L236.5,497.5 L244.5,497.5 Z" fill="none" stroke="#ff00ff" stroke-width="1"/>
<text class="m" y="508" fill="#ff00ff" ><tspan x="237.30">4</tspan></text>
<path class="c" d="M66.5,673.5 L59.5,680.5 L73.5,680.5 Z" fill="none" stroke="#ff00ff" stroke-width="1"/>
<path class="c" d="M280.5,458.5 L276.5,471.5 L284.5,471.5 Z" fill="none" stroke="#ff00ff" stroke-width="1"/>
<text class="m" y="482" fill="#ff00ff" ><tspan x="277.30">5</tspan></text>
<path class="c" d="M118.5,673.5 L111.5,680.5 L125.5,680.5 Z" fill="none" stroke="#ff00ff" stroke-width="1"/>
<path class="c" d="M355.5,503.5 L351.5,516.5 L359.5,516.5 Z" fill="none" stroke="#ff00ff" stroke-width="1"/>
<text class="m" y="527" fill="#ff00ff" ><tspan x="352.30">6</tspan></text>
<path class="c" d="M222.5,673.5 L215.5,680.5 L229.5,680.5 Z" fill="none" stroke="#ff00ff" stroke-width="1"/>
<path class="c" d="M307.5,591.5 L303.5,604.5 L311.5,604.5 Z" fill="none" stroke="#ff00ff" stroke-width="1"/>
<text class="m" y="615" fill="#ff00ff" ><tspan x="304.30">7</tspan></text>
<path class="c" d="M431.5,673.5 L424.5,680.5 L438.5,680.5 Z" fill="none" stroke="#ff00ff" stroke-width="1"/>
<path class="c" d="M362.5,532.5 L358.5,519.5 L366.5,519.5 Z" fill="none" stroke="#ff00ff" stroke-width="1"/>
<text class="m" y="517" fill="#ff00ff" ><tspan x="359.30">8</tspan></text>
<path class="c" d="M269.5,673 L262,681 L277,681 Z" fill="#ff00ff"/>
<text class="m" y="376" fill="#00ff00" ><tspan x="452.50">Tr4 Ls Lin Mag 1</tspan><tspan class="z" x="581.00">00</tspan><tspan x="596.50">.</tspan><tspan class="z" x="605.00">0</tspan><tspan x="612.50">mU/ Ref</tspan><tspan class="z" x="677.00">0</tspan><tspan x="684.50">.</tspan><tspan class="z" x="693.00">000</tspan><tspan x="716.50">U [F2 Equ]</tspan></text>
<rect x="552" y="390" width="1" height="283" fill="#424242" class="c"/>
<rect x="587" y="390" width="1" height="283" fill="#424242" class="c"/>
<rect x="622" y="390" width="1" height="283" fill="#424242" class="c"/>
<rect x="657" y="390" width="1" height="283" fill="#424242" class="c"/>
<rect x="693" y="390" width="1" height="283" fill="#424242" class="c"/>
<rect x="728" y="390" width="1" height="283" fill="#424242" class="c"/>
<rect x="763" y="390" width="1" height="283" fill="#424242" class="c"/>
<rect x="798" y="390" width="1" height="283" fill="#424242" class="c"/>
<rect x="833" y="390" width="1" height="283" fill="#424242" class="c"/>
<rect x="517" y="418" width="353" height="1" fill="#424242" class="c"/>
<rect x="517" y="446" width="353" height="1" fill="#424242" class="c"/>
<rect x="517" y="474" width="353" height="1" fill="#424242" class="c"/>
<rect x="517" y="502" width="353" height="1" fill="#424242" class="c"/>
<rect x="517" y="531" width="353" height="1" fill="#424242" class="c"/>
<rect x="517" y="559" width="353" height="1" fill="#424242" class="c"/>
<rect x="517" y="587" width="353" height="1" fill="#424242" class="c"/>
<rect x="517" y="615" width="353" height="1" fill="#424242" class="c"/>
<rect x="517" y="643" width="353" height="1" fill="#424242" class="c"/>
<rect x="517" y="390" width="1" height="283" fill="#a8a8a8" class="c"/>
<rect x="869" y="390" width="1" height="283" fill="#a8a8a8" class="c"/>
<rect x="517" y="390" width="353" height="1" fill="#a8a8a8" class="c"/>
<rect x="517" y="672" width="353" height="1" fill="#a8a8a8" class="c"/>
<text class="m" y="394" fill="#b4b4b4" ><tspan x="466.20">1.</tspan><tspan class="z" x="482.70">000</tspan></text>
<text class="m" y="422" fill="#b4b4b4" ><tspan x="458.20">9</tspan><tspan class="z" x="466.70">00</tspan><tspan x="482.20">.</tspan><tspan class="z" x="490.70">0</tspan><tspan x="498.20">m</tspan></text>
<text class="m" y="450" fill="#b4b4b4" ><tspan x="458.20">8</tspan><tspan class="z" x="466.70">00</tspan><tspan x="482.20">.</tspan><tspan class="z" x="490.70">0</tspan><tspan x="498.20">m</tspan></text>
<text class="m" y="478" fill="#b4b4b4" ><tspan x="458.20">7</tspan><tspan class="z" x="466.70">00</tspan><tspan x="482.20">.</tspan><tspan class="z" x="490.70">0</tspan><tspan x="498.20">m</tspan></text>
<text class="m" y="506" fill="#b4b4b4" ><tspan x="458.20">6</tspan><tspan class="z" x="466.70">00</tspan><tspan x="482.20">.</tspan><tspan class="z" x="490.70">0</tspan><tspan x="498.20">m</tspan></text>
<text class="m" y="535" fill="#b4b4b4" ><tspan x="458.20">5</tspan><tspan class="z" x="466.70">00</tspan><tspan x="482.20">.</tspan><tspan class="z" x="490.70">0</tspan><tspan x="498.20">m</tspan></text>
<text class="m" y="563" fill="#b4b4b4" ><tspan x="458.20">4</tspan><tspan class="z" x="466.70">00</tspan><tspan x="482.20">.</tspan><tspan class="z" x="490.70">0</tspan><tspan x="498.20">m</tspan></text>
<text class="m" y="591" fill="#b4b4b4" ><tspan x="458.20">3</tspan><tspan class="z" x="466.70">00</tspan><tspan x="482.20">.</tspan><tspan class="z" x="490.70">0</tspan><tspan x="498.20">m</tspan></text>
<text class="m" y="619" fill="#b4b4b4" ><tspan x="458.20">2</tspan><tspan class="z" x="466.70">00</tspan><tspan x="482.20">.</tspan><tspan class="z" x="490.70">0</tspan><tspan x="498.20">m</tspan></text>
<text class="m" y="647" fill="#b4b4b4" ><tspan x="458.20">1</tspan><tspan class="z" x="466.70">00</tspan><tspan x="482.20">.</tspan><tspan class="z" x="490.70">0</tspan><tspan x="498.20">m</tspan></text>
<text class="m" y="676" fill="#00ff00" ><tspan class="z" x="466.70">0</tspan><tspan x="474.20">.</tspan><tspan class="z" x="482.70">000</tspan></text>
<text class="m" y="402" fill="#00ff00" ><tspan x="527.50">1  1</tspan><tspan class="z" x="560.00">00</tspan><tspan x="575.50">.</tspan><tspan class="z" x="584.00">00000</tspan><tspan x="631.50">MHz  2.5713 nU</tspan></text>
<text class="m" y="415" fill="#00ff00" ><tspan x="527.50">2  5</tspan><tspan class="z" x="560.00">00</tspan><tspan x="575.50">.</tspan><tspan class="z" x="584.00">00000</tspan><tspan x="631.50">MHz  2.3895 nU</tspan></text>
<text class="m" y="428" fill="#00ff00" ><tspan x="527.50">3  1.</tspan><tspan class="z" x="568.00">0000000</tspan><tspan x="631.50">GHz  2.3754 nU</tspan></text>
<text class="m" y="441" fill="#00ff00" ><tspan x="527.50">4  2.5</tspan><tspan class="z" x="576.00">000000</tspan><tspan x="631.50">GHz  2.44</tspan><tspan class="z" x="704.00">0</tspan><tspan x="711.50">9 nU</tspan></text>
<text class="m" y="454" fill="#00ff00" ><tspan x="527.50">5  5.</tspan><tspan class="z" x="568.00">0000000</tspan><tspan x="631.50">GHz  2.7197 nU</tspan></text>
<text class="m" y="467" fill="#00ff00" ><tspan x="527.50">6  1</tspan><tspan class="z" x="560.00">0</tspan><tspan x="567.50">.</tspan><tspan class="z" x="576.00">000000</tspan><tspan x="631.50">GHz  6.2</tspan><tspan class="z" x="696.00">0</tspan><tspan x="703.50">71 nU</tspan></text>
<text class="m" y="480" fill="#00ff00" ><tspan x="527.50">7  2</tspan><tspan class="z" x="560.00">0</tspan><tspan x="567.50">.</tspan><tspan class="z" x="576.00">000000</tspan><tspan x="631.50">GHz  862.</tspan><tspan class="z" x="704.00">0</tspan><tspan x="711.50">4 pU</tspan></text>
<text class="m" y="493" fill="#00ff00" ><tspan x="519.50">&gt;8  12.273122 GHz  389.</tspan><tspan class="z" x="704.00">00</tspan><tspan x="727.50">pU</tspan></text>
<rect x="517" y="672" width="353" height="1" fill="#00ff00" class="c"/>
<path class="c" d="M509,665 L517,672.5 L509,680 Z" fill="#00ff00"/>
<path class="c" d="M878,665 L870,672.5 L878,680 Z" fill="#00ff00"/>
<path class="c" d="M517.5,672.5 L513.5,685.5 L521.5,685.5 Z" fill="none" stroke="#00ff00" stroke-width="1"/>
<text class="m" y="696" fill="#00ff00" ><tspan x="514.30">1</tspan></text>
<path class="c" d="M517.5,673.5 L510.5,680.5 L524.5,680.5 Z" fill="none" stroke="#00ff00" stroke-width="1"/>
<path class="c" d="M524.5,672.5 L520.5,685.5 L528.5,685.5 Z" fill="none" stroke="#00ff00" stroke-width="1"/>
<text class="m" y="696" fill="#00ff00" ><tspan x="521.30">2</tspan></text>
<path class="c" d="M524.5,673.5 L517.5,680.5 L531.5,680.5 Z" fill="none" stroke="#00ff00" stroke-width="1"/>
<path class="c" d="M533.5,672.5 L529.5,685.5 L537.5,685.5 Z" fill="none" stroke="#00ff00" stroke-width="1"/>
<text class="m" y="696" fill="#00ff00" ><tspan x="530.30">3</tspan></text>
<path class="c" d="M533.5,673.5 L526.5,680.5 L540.5,680.5 Z" fill="none" stroke="#00ff00" stroke-width="1"/>
<path class="c" d="M560.5,672.5 L556.5,685.5 L564.5,685.5 Z" fill="none" stroke="#00ff00" stroke-width="1"/>
<text class="m" y="696" fill="#00ff00" ><tspan x="557.30">4</tspan></text>
<path class="c" d="M560.5,673.5 L553.5,680.5 L567.5,680.5 Z" fill="none" stroke="#00ff00" stroke-width="1"/>
<path class="c" d="M604.5,672.5 L600.5,685.5 L608.5,685.5 Z" fill="none" stroke="#00ff00" stroke-width="1"/>
<text class="m" y="696" fill="#00ff00" ><tspan x="601.30">5</tspan></text>
<path class="c" d="M604.5,673.5 L597.5,680.5 L611.5,680.5 Z" fill="none" stroke="#00ff00" stroke-width="1"/>
<path class="c" d="M692.5,672.5 L688.5,685.5 L696.5,685.5 Z" fill="none" stroke="#00ff00" stroke-width="1"/>
<text class="m" y="696" fill="#00ff00" ><tspan x="689.30">6</tspan></text>
<path class="c" d="M692.5,673.5 L685.5,680.5 L699.5,680.5 Z" fill="none" stroke="#00ff00" stroke-width="1"/>
<path class="c" d="M869.5,672.5 L865.5,685.5 L873.5,685.5 Z" fill="none" stroke="#00ff00" stroke-width="1"/>
<text class="m" y="696" fill="#00ff00" ><tspan x="866.30">7</tspan></text>
<path class="c" d="M869.5,673.5 L862.5,680.5 L876.5,680.5 Z" fill="none" stroke="#00ff00" stroke-width="1"/>
<path class="c" d="M732.5,672.5 L728.5,659.5 L736.5,659.5 Z" fill="none" stroke="#00ff00" stroke-width="1"/>
<text class="m" y="657" fill="#00ff00" ><tspan x="729.30">8</tspan></text>
<path class="c" d="M732.5,673 L725,681 L740,681 Z" fill="#00ff00"/>
</g>
</svg></body></html>
